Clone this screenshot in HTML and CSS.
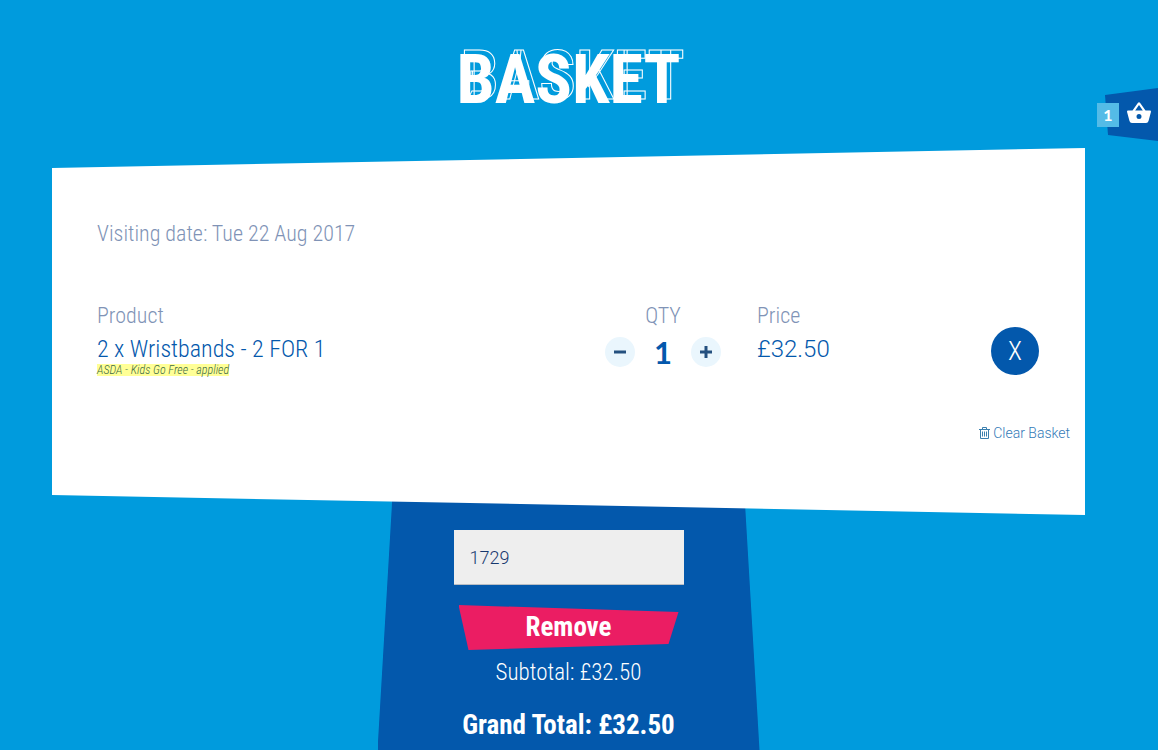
FILE: index.html
```html
<!DOCTYPE html>
<html lang="en">
<head>
<meta charset="utf-8">
<meta name="viewport" content="width=device-width, initial-scale=1">
<title>Basket</title>
<link rel="stylesheet" href="styles.css">
</head>
<body>
<a class="cart" href="#basket" aria-label="Basket, 1 item">
  <span class="cart-count">1</span>
  <svg class="cart-icon" viewBox="0 0 24 21" aria-hidden="true">
    <path fill="#fff" fill-rule="evenodd" d="M1 8.500h4.500L11 .8q1-1 2 0L18.500 8.500H23q1 0 1 1.300L21.500 19Q21 21 19 21H5Q3 21 2.500 19L0 9.800Q0 8.500 1 8.500ZM8.200 8.500h7.600L12 3ZM12 12a2.500 2.500 0 1 0 0 5a2.500 2.500 0 1 0 0-5Z"/>
  </svg>
</a>
<main class="page" id="basket">
  <h1 class="title"><span class="title-text">BASKET</span></h1>
  <section class="card">
    <p class="visit">Visiting date: Tue 22 Aug 2017</p>
    <div class="line">
      <div class="product">
        <div class="label">Product</div>
        <div class="value">2 x Wristbands - 2 FOR 1</div>
        <em class="promo">ASDA - Kids Go Free - applied</em>
      </div>
      <div class="qty">
        <div class="label">QTY</div>
        <div class="stepper">
          <button class="step" type="button" aria-label="Decrease quantity"><svg class="step-icon" viewBox="0 0 12 12"><path d="M0 6h12"/></svg></button>
          <span class="qty-value">1</span>
          <button class="step" type="button" aria-label="Increase quantity"><svg class="step-icon" viewBox="0 0 12 12"><path d="M0 6h12M6 0v12"/></svg></button>
        </div>
      </div>
      <div class="price">
        <div class="label">Price</div>
        <div class="value amount">£32.50</div>
      </div>
      <button class="delete" type="button">X</button>
    </div>
    <a class="clear" href="#clear">
      <svg class="trash" viewBox="0 0 11 12" aria-hidden="true"><path fill="none" stroke="#3a7fae" d="M0 2.500h11M3.500 2.500v-2h4v2M1.500 2.500v9h8v-9M3.500 4.500v5M5.500 4.500v5M7.500 4.500v5"/></svg>
      <span>Clear Basket</span>
    </a>
  </section>
  <section class="summary">
    <input class="code" type="text" value="1729" aria-label="Promotional code">
    <button class="remove" type="button">Remove</button>
    <p class="subtotal">Subtotal: £32.50</p>
    <p class="total">Grand Total: £32.50</p>
  </section>
</main>
</body>
</html>
```
FILE: styles.css
```css
* { box-sizing: border-box; }
body {
  margin: 0;
  background: #009bdd;
  font-family: "Roboto Condensed", Roboto, "Liberation Sans", sans-serif;
  font-weight: 300;
  color: #0358ac;
}
p, h1 { margin: 0; }
button { border: 0; padding: 0; font-family: inherit; cursor: pointer; }
.page {
  display: flex;
  flex-direction: column;
  min-height: 100vh;
  padding: 0 73px 0 52px;
}
.title {
  padding: 40px 0 28px;
  text-align: center;
  font: bold 68px/80px "Roboto Condensed", Roboto, sans-serif;
  color: #fff;
}
.title-text { position: relative; z-index: 0; }
.title-text::after {
  content: "BASKET";
  position: absolute;
  left: 4px;
  top: -4px;
  z-index: -1;
  color: transparent;
  -webkit-text-stroke: 1px #fff;
}
.card {
  position: relative;
  z-index: 1;
  display: flex;
  flex-direction: column;
  padding: 71px 15px 72px 45px;
  background: #fff;
  clip-path: polygon(0 20px, 100% 0, 100% 100%, 0 calc(100% - 20px));
}
.visit, .label { font-size: 22px; line-height: 30px; color: #8093b6; }
.visit { margin-bottom: 52px; }
.line {
  display: grid;
  grid-template-columns: minmax(280px, 508px) 116px minmax(100px, 1fr) 48px;
  padding-right: 31px;
}
.value { font-size: 24px; line-height: 30px; margin-top: 3px; }
.amount { font-family: Roboto, sans-serif; }
.promo {
  display: table;
  background: #ffff96;
  color: #3d6b45;
  font-size: 12px;
  line-height: 12px;
}
.qty .label { text-align: center; }
.stepper { display: flex; align-items: center; justify-content: space-between; margin-top: 2px; }
.step {
  display: grid;
  place-items: center;
  width: 30px;
  height: 30px;
  border-radius: 50%;
  background: #eaf6fd;
}
.step-icon { width: 12px; height: 12px; stroke: #24507f; stroke-width: 3; }
.qty-value { font: bold 31px/38px Lato, "Noto Sans", sans-serif; }
.price { padding-left: 36px; }
.delete {
  width: 48px;
  height: 48px;
  margin-top: 26px;
  border-radius: 50%;
  background: #0358ac;
  color: #fff;
  font-size: 26px;
  font-weight: 300;
}
.clear {
  display: flex;
  align-items: center;
  gap: 3px;
  align-self: flex-end;
  margin-top: 47px;
  color: #337ab7;
  font-family: Roboto, sans-serif;
  font-size: 14px;
  line-height: 20px;
  text-decoration: none;
}
.trash { width: 11px; height: 12px; }
.summary {
  flex: 1;
  display: flex;
  flex-direction: column;
  align-items: center;
  align-self: center;
  width: 382px;
  margin-top: -20px;
  padding: 35px 20px 0;
  background: #0358ac;
  clip-path: polygon(15px 0, 367px 0, 100% 100%, 0 100%);
  color: #fff;
}
.code {
  width: 230px;
  height: 55px;
  padding: 0 16px;
  border: 0;
  border-bottom: 1px solid #b8bdc4;
  border-radius: 0;
  background: #eee;
  color: #17386e;
  font: 300 18px Roboto, sans-serif;
}
.remove {
  width: 220px;
  height: 45px;
  margin-top: 20px;
  padding-bottom: 2px;
  background: #eb1d63;
  clip-path: polygon(0 0, 100% 7px, 210px 39px, 10px 100%);
  color: #fff;
  font-size: 27px;
  font-weight: 700;
}
.subtotal { margin-top: 8px; font-size: 23px; line-height: 30px; }
.total { margin-top: 20px; font-size: 27px; line-height: 34px; font-weight: 700; }
.cart {
  position: fixed;
  right: 0;
  top: 88px;
  display: flex;
  align-items: center;
  gap: 8px;
  height: 54px;
  padding-right: 7px;
  color: #fff;
  text-decoration: none;
}
.cart::before {
  content: "";
  position: absolute;
  right: 0;
  top: 0;
  width: 53px;
  height: 54px;
  background: #0358ac;
  clip-path: polygon(0 7px, 100% 0, 100% 53px, 3px 47px);
}
.cart-count {
  position: relative;
  width: 22px;
  background: #54bbe7;
  text-align: center;
  font: bold 16px/24px Lato, "Noto Sans", sans-serif;
}
.cart-icon { position: relative; width: 24px; height: 21px; margin-bottom: 6px; }
@media (max-width: 900px) {
  .line { grid-template-columns: 1fr 116px; row-gap: 16px; }
  .price { padding-left: 0; }
}
```
